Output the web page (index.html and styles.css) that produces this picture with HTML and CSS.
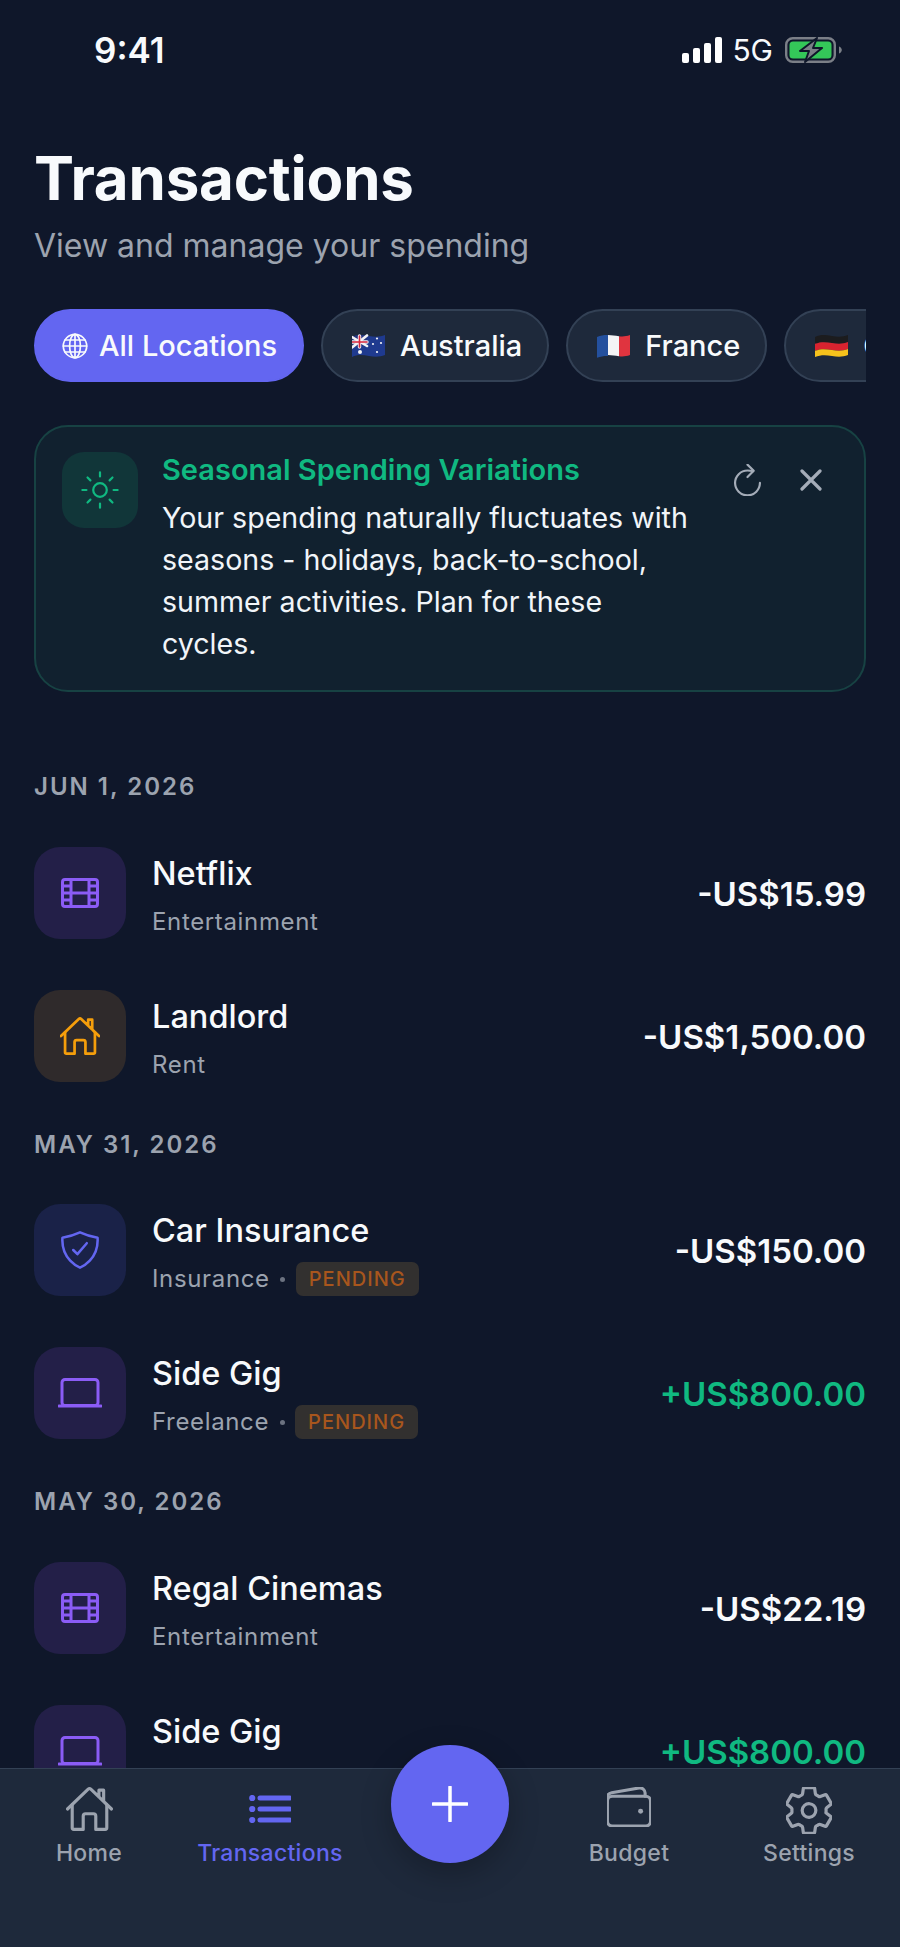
FILE: index.html

```html
<!DOCTYPE html>
<html lang="en">
<head>
  <meta charset="UTF-8">
  <meta name="viewport" content="width=device-width, initial-scale=1.0">
  <title>Transactions</title>
  <link rel="stylesheet" href="styles.css">
</head>
<body>
  <svg class="sprite" aria-hidden="true">
    <symbol id="i-film" viewBox="0 0 38 30">
      <rect x="1.5" y="1.5" width="35" height="27" rx="2.5"/>
      <path d="M10 1.5v27M28 1.5v27M10 15h18M1.5 8h8.5M1.5 15h8.5M1.5 22h8.5M28 8h8.5M28 15h8.5M28 22h8.5"/>
    </symbol>
    <symbol id="i-home" viewBox="32 32 448 448">
      <path d="M80 212v236a16 16 0 0016 16h96V328a24 24 0 0124-24h80a24 24 0 0124 24v136h96a16 16 0 0016-16V212"/>
      <path d="M480 256L266.89 52c-5-5.28-16.69-5.34-21.78 0L32 256M400 179V64h-48v69"/>
    </symbol>
    <symbol id="i-laptop" viewBox="0 0 44 30">
      <rect x="4" y="1.5" width="36" height="26" rx="3"/>
      <path d="M1 28h42"/>
    </symbol>
  </svg>

  <main class="content">
    <div class="status-bar">
      <span class="time">9:41</span>
      <div class="status-icons">
        <svg class="signal" viewBox="0 0 41 26">
          <rect x="0" y="16" width="7" height="10" rx="2"/>
          <rect x="11" y="11" width="7" height="15" rx="2"/>
          <rect x="22" y="6" width="7" height="20" rx="2"/>
          <rect x="33" y="0" width="7" height="26" rx="2"/>
        </svg>
        <span class="network">5G</span>
        <svg class="battery" viewBox="0 0 57 26">
          <rect x="1.2" y="1.2" width="48.6" height="23.6" rx="6.5" class="battery-case"/>
          <rect x="4.5" y="4.5" width="42" height="17" rx="3.5" class="battery-fill"/>
          <path d="M54 9.5c1.8.6 2.8 2 2.8 3.5s-1 2.9-2.8 3.5z" class="battery-cap"/>
          <path d="M32 1L15 14h9l-4 11 17-14h-9z" class="battery-bolt"/>
        </svg>
      </div>
    </div>

    <header class="page-head">
      <h1>Transactions</h1>
      <p>View and manage your spending</p>
    </header>

    <div class="chips">
      <div class="chip active">
        <svg class="globe" viewBox="0 0 26 26">
          <circle cx="13" cy="13" r="11.7"/>
          <ellipse cx="13" cy="13" rx="5.4" ry="11.7"/>
          <path d="M13 1.3v23.4M1.3 13h23.4M3 7h20M3 19h20"/>
        </svg>
        All Locations
      </div>
      <div class="chip">
        <svg class="flag" viewBox="0 0 33 24">
          <path d="M0 3c6-3 11-2 17-1s11 1 16-1v20c-5 2-10 2-16 1S6 20 0 23z" fill="#1f3a8f"/>
          <path d="M0 3c5-2.400 10-2.300 15-1.500V12c-5-.9-10-.8-15 1.500z" fill="#24347e"/>
          <path d="M0 3l15 9M15 1.500L0 13.500" stroke="#f3f3f5" stroke-width="2.600"/>
          <path d="M7.500 2v11M0 8h15" stroke="#f3f3f5" stroke-width="3.400"/>
          <path d="M7.500 2v11M0 8h15" stroke="#d7263d" stroke-width="1.600"/>
          <circle cx="8" cy="18" r="2" fill="#f3f3f5"/>
          <circle cx="25" cy="4.500" r="1.100" fill="#f3f3f5"/>
          <circle cx="21" cy="10" r="1.100" fill="#f3f3f5"/>
          <circle cx="29" cy="9" r="1.100" fill="#f3f3f5"/>
          <circle cx="25" cy="18" r="1.100" fill="#f3f3f5"/>
        </svg>
        Australia
      </div>
      <div class="chip">
        <svg class="flag" viewBox="0 0 33 24">
          <path d="M0 3c4-1.500 7-2 11-1.900V22c-4-.1-7 .3-11 1.800z" fill="#24509e"/>
          <path d="M11 1.100c4 .1 7 .7 11 1.100v20c-4-.4-7-1-11-1.200z" fill="#f4f4f6"/>
          <path d="M22 2.200c4 .4 7 .2 11-1.200v20c-4 1.400-7 1.600-11 1.200z" fill="#e0343f"/>
        </svg>
        France
      </div>
      <div class="chip">
        <svg class="flag" viewBox="0 0 33 24">
          <path d="M0 3c6-3 11-2 17-1s11 1 16-1v7c-5 2-10 2-16 1S6 7.500 0 9.800z" fill="#1c1c1e"/>
          <path d="M0 9.800c6-2.300 11-1.800 17-.8s11 1 16-1v7c-5 2-10 2-16 1S6 14.500 0 16.800z" fill="#d8232f"/>
          <path d="M0 16.800c6-2.300 11-1.800 17-.8s11 1 16-1v6c-5 2-10 2-16 1S6 20.600 0 23z" fill="#f6c21c"/>
        </svg>
        Germany
      </div>
    </div>

    <section class="insight">
      <div class="insight-icon">
        <svg viewBox="32 32 448 448">
          <path d="M256 48v48M256 416v48M403.080 108.920l-33.940 33.940M142.860 369.140l-33.940 33.940M464 256h-48M96 256H48M403.080 403.080l-33.940-33.940M142.860 142.860l-33.940-33.940"/>
          <circle cx="256" cy="256" r="80"/>
        </svg>
      </div>
      <div class="insight-text">
        <h2>Seasonal Spending Variations</h2>
        <p>Your spending naturally fluctuates with seasons - holidays, back-to-school, summer activities. Plan for these cycles.</p>
      </div>
      <div class="insight-actions">
        <svg class="refresh" viewBox="90 50 332 412">
          <path d="M320 146s24.360-12-64-12a160 160 0 10160 160"/>
          <path d="M256 58l80 80-80 80"/>
        </svg>
        <svg class="close" viewBox="0 0 22 22">
          <path d="M2 2l18 18M20 2L2 20"/>
        </svg>
      </div>
    </section>

    <h3 class="date first">JUN 1, 2026</h3>
    <div class="tx">
      <div class="tx-icon tile-violet"><svg class="film"><use href="#i-film"/></svg></div>
      <div class="tx-info">
        <div class="tx-name">Netflix</div>
        <div class="tx-sub">Entertainment</div>
      </div>
      <div class="tx-amount">-US$15.99</div>
    </div>
    <div class="tx">
      <div class="tx-icon tile-amber"><svg class="house"><use href="#i-home"/></svg></div>
      <div class="tx-info">
        <div class="tx-name">Landlord</div>
        <div class="tx-sub">Rent</div>
      </div>
      <div class="tx-amount">-US$1,500.00</div>
    </div>

    <h3 class="date">MAY 31, 2026</h3>
    <div class="tx">
      <div class="tx-icon tile-blue">
        <svg class="shield" viewBox="32 32 448 448">
          <path d="M336 176L225.200 304 176 255.800"/>
          <path d="M463.100 112.370C373.680 96.330 336.710 84.450 256 48c-80.710 36.450-117.680 48.330-207.100 64.370C32.700 369.130 240.580 457.790 256 464c15.420-6.210 223.300-94.870 207.100-351.630z"/>
        </svg>
      </div>
      <div class="tx-info">
        <div class="tx-name">Car Insurance</div>
        <div class="tx-sub">Insurance <span class="dot"></span> <span class="badge">PENDING</span></div>
      </div>
      <div class="tx-amount">-US$150.00</div>
    </div>
    <div class="tx">
      <div class="tx-icon tile-violet"><svg class="laptop"><use href="#i-laptop"/></svg></div>
      <div class="tx-info">
        <div class="tx-name">Side Gig</div>
        <div class="tx-sub">Freelance <span class="dot"></span> <span class="badge">PENDING</span></div>
      </div>
      <div class="tx-amount income">+US$800.00</div>
    </div>

    <h3 class="date">MAY 30, 2026</h3>
    <div class="tx">
      <div class="tx-icon tile-violet"><svg class="film"><use href="#i-film"/></svg></div>
      <div class="tx-info">
        <div class="tx-name">Regal Cinemas</div>
        <div class="tx-sub">Entertainment</div>
      </div>
      <div class="tx-amount">-US$22.19</div>
    </div>
    <div class="tx">
      <div class="tx-icon tile-violet"><svg class="laptop"><use href="#i-laptop"/></svg></div>
      <div class="tx-info">
        <div class="tx-name">Side Gig</div>
        <div class="tx-sub">Freelance</div>
      </div>
      <div class="tx-amount income">+US$800.00</div>
    </div>
  </main>

  <nav class="tabbar">
    <div class="tab">
      <svg class="tab-home"><use href="#i-home"/></svg>
      <span>Home</span>
    </div>
    <div class="tab current">
      <svg class="tab-list" viewBox="0 0 42 28">
        <circle cx="3.200" cy="3" r="3.100"/>
        <circle cx="3.200" cy="14" r="3.100"/>
        <circle cx="3.200" cy="25" r="3.100"/>
        <path d="M11 3h29.500M11 14h29.500M11 25h29.500"/>
      </svg>
      <span>Transactions</span>
    </div>
    <div class="tab-gap"></div>
    <div class="tab">
      <svg class="tab-wallet" viewBox="44 60 424 376">
        <rect x="48" y="144" width="416" height="288" rx="48" ry="48"/>
        <path d="M411.360 144v-30A50 50 0 00352 64.900L88.640 109.850A50 50 0 0048 159v49"/>
        <circle cx="368" cy="288" r="24" class="solid"/>
      </svg>
      <span>Budget</span>
    </div>
    <div class="tab">
      <svg class="tab-gear" viewBox="40 36 432 440">
        <path d="M262.290 192.310a64 64 0 1057.400 57.400 64.130 64.130 0 00-57.400-57.400zM416.390 256a154.340 154.340 0 01-1.530 20.790l45.210 35.460a10.810 10.810 0 012.450 13.750l-42.770 74a10.810 10.810 0 01-13.140 4.590l-44.900-18.080a16.110 16.110 0 00-15.170 1.750A164.480 164.480 0 01325 400.800a15.940 15.940 0 00-8.820 12.140l-6.730 47.890a11.080 11.080 0 01-10.680 9.170h-85.540a11.110 11.110 0 01-10.690-8.870l-6.720-47.820a16.070 16.070 0 00-9-12.220 155.300 155.300 0 01-21.460-12.570 16 16 0 00-15.110-1.710l-44.890 18.070a10.810 10.810 0 01-13.140-4.580l-42.770-74a10.800 10.800 0 012.450-13.750l38.210-30a16.050 16.050 0 006-14.080c-.36-4.170-.58-8.330-.58-12.500s.21-8.270.58-12.350a16 16 0 00-6.070-13.940l-38.190-30A10.810 10.810 0 0149.480 186l42.770-74a10.810 10.810 0 0113.140-4.590l44.900 18.080a16.110 16.110 0 0015.170-1.750A164.480 164.480 0 01187 111.200a15.940 15.940 0 008.820-12.140l6.730-47.890A11.080 11.080 0 01213.230 42h85.540a11.110 11.110 0 0110.690 8.870l6.720 47.820a16.070 16.070 0 009 12.220 155.300 155.300 0 0121.460 12.570 16 16 0 0015.110 1.710l44.890-18.070a10.810 10.810 0 0113.140 4.580l42.770 74a10.800 10.800 0 01-2.450 13.750l-38.210 30a16.050 16.050 0 00-6.050 14.080c.33 4.140.55 8.300.55 12.470z"/>
      </svg>
      <span>Settings</span>
    </div>
    <button class="fab" aria-label="Add transaction">
      <svg viewBox="0 0 36 36"><path d="M18 1v34M1 18h34"/></svg>
    </button>
  </nav>
</body>
</html>
```

FILE: styles.css

```css
* {
  box-sizing: border-box;
}
html, body {
  margin: 0;
  height: 1947px;
}
body {
  display: flex;
  flex-direction: column;
  overflow: hidden;
  background: #0f172a;
  color: #f8fafc;
  font-family: Inter, "Liberation Sans", sans-serif;
}
svg {
  fill: none;
  stroke: currentColor;
  stroke-linecap: round;
  stroke-linejoin: round;
}
.sprite {
  display: none;
}
.content {
  flex: 1;
  min-height: 0;
  overflow: hidden;
  padding: 0 34px;
}

/* status bar */
.status-bar {
  display: flex;
  justify-content: space-between;
  align-items: center;
  height: 100px;
  padding: 0 24px 0 60px;
}
.time {
  font-size: 35px;
  font-weight: 600;
}
.status-icons {
  display: flex;
  align-items: center;
  gap: 12px;
}
.signal {
  width: 41px;
  height: 26px;
  fill: #fff;
  stroke: none;
}
.network {
  margin-left: -3px;
  font-size: 30px;
  font-weight: 400;
}
.battery {
  width: 57px;
  height: 26px;
}
.battery-case {
  stroke: #7b7f87;
  stroke-width: 2.400;
}
.battery-fill {
  fill: #34c759;
  stroke: none;
}
.battery-cap {
  fill: #7b7f87;
  stroke: none;
}
.battery-bolt {
  fill: #7b7f87;
  stroke: #0f172a;
  stroke-width: 2;
}

/* heading */
.page-head {
  padding-top: 44px;
}
.page-head h1 {
  margin: 0;
  font-size: 60px;
  line-height: 68px;
  font-weight: 700;
  letter-spacing: -.2px;
}
.page-head p {
  margin: 12px 0 0;
  font-size: 32px;
  line-height: 44px;
  color: #9ca3af;
}

/* location chips */
.chips {
  display: flex;
  gap: 17px;
  margin-top: 41px;
  overflow: hidden;
}
.chip {
  flex: none;
  display: flex;
  align-items: center;
  gap: 15px;
  height: 73px;
  padding: 0 25px 0 29px;
  background: #1e293b;
  border: 2px solid #334155;
  border-radius: 37px;
  font-size: 29px;
  font-weight: 500;
}
.chip.active {
  gap: 11px;
  padding: 0 25px 0 26px;
  background: #6366f1;
  border-color: #6366f1;
}
.globe {
  width: 26px;
  height: 26px;
  stroke-width: 1.700;
}
.flag {
  width: 33px;
  height: 24px;
  stroke: none;
}

/* insight card */
.insight {
  display: flex;
  align-items: flex-start;
  height: 267px;
  margin-top: 43px;
  padding: 25px 26px;
  background: #11212f;
  border: 2px solid #174243;
  border-radius: 34px;
}
.insight-icon {
  flex: none;
  display: flex;
  align-items: center;
  justify-content: center;
  width: 76px;
  height: 76px;
  margin-right: 24px;
  background: #113639;
  border-radius: 22px;
  color: #10b981;
}
.insight-icon svg {
  width: 38px;
  height: 38px;
  stroke-width: 26;
}
.insight-text {
  flex: 1;
}
.insight-text h2 {
  margin: 0;
  font-size: 29px;
  line-height: 36px;
  font-weight: 600;
  color: #10b981;
}
.insight-text p {
  margin: 9px 0 0;
  max-width: 530px;
  font-size: 28.600px;
  line-height: 42px;
  color: #f1f5f9;
}
.insight-actions {
  flex: none;
  display: flex;
  align-items: center;
  gap: 39px;
  padding: 12px 16px 0 0;
  color: #a4acb8;
}
.refresh {
  width: 27px;
  height: 32px;
  stroke-width: 28;
}
.close {
  width: 22px;
  height: 22px;
  stroke-width: 3.200;
}

/* transactions */
.date {
  margin: 0;
  padding: 22.500px 0 19px;
  font-size: 24px;
  line-height: 30px;
  font-weight: 600;
  letter-spacing: 2px;
  color: #9ca3af;
}
.date.first {
  padding-top: 80px;
}
.tx {
  display: flex;
  align-items: center;
  height: 143px;
}
.tx-icon {
  flex: none;
  display: flex;
  align-items: center;
  justify-content: center;
  width: 92px;
  height: 92px;
  margin-right: 26px;
  border-radius: 26px;
}
.tile-violet {
  background: #231f48;
  color: #8b5cf6;
}
.tile-amber {
  background: #2f2a2b;
  color: #f59e0b;
}
.tile-blue {
  background: #1a2248;
  color: #6366f1;
}
.film {
  width: 38px;
  height: 30px;
  stroke-width: 3;
}
.house {
  width: 40px;
  height: 38px;
  stroke-width: 32;
}
.shield {
  width: 38px;
  height: 38px;
  stroke-width: 30;
}
.laptop {
  width: 44px;
  height: 30px;
  stroke-width: 3;
}
.tx-info {
  flex: 1;
  min-width: 0;
  padding-top: 7px;
}
.tx-name {
  font-size: 32.500px;
  line-height: 40px;
  font-weight: 500;
}
.tx-sub {
  display: flex;
  align-items: center;
  gap: 10.500px;
  margin-top: 11px;
  height: 34px;
  font-size: 24px;
  line-height: 34px;
  letter-spacing: .65px;
  color: #9ca3af;
}
.dot {
  width: 5px;
  height: 5px;
  border-radius: 50%;
  background: #6b7280;
}
.badge {
  height: 34px;
  padding: 0 13px;
  background: #32302f;
  border-radius: 7px;
  font-size: 20px;
  font-weight: 500;
  letter-spacing: 1px;
  color: #a8561d;
}
.tx-amount {
  padding-top: 2px;
  font-size: 33px;
  font-weight: 600;
}
.income {
  color: #10b981;
}

/* tab bar */
.tabbar {
  position: relative;
  flex: none;
  display: grid;
  grid-template-columns: repeat(5, 1fr);
  align-items: start;
  height: 179px;
  background: #1e293b;
  border-top: 1px solid #334155;
}
.tab {
  display: flex;
  flex-direction: column;
  align-items: center;
  height: 100px;
  padding: 18px 2px 0 0;
  color: #9ca3af;
}
.tab span {
  position: absolute;
  top: 70px;
  font-size: 23px;
  line-height: 28px;
  font-weight: 500;
  letter-spacing: .3px;
}
.tab.current {
  padding-right: 0;
  color: #6366f1;
}
.tab-home {
  width: 47px;
  height: 44px;
  stroke-width: 32;
}
.tab-list {
  width: 42px;
  height: 28px;
  margin-top: 8px;
  stroke-width: 5;
}
.tab-list circle {
  fill: currentColor;
  stroke: none;
}
.tab-wallet {
  width: 44px;
  height: 40px;
  stroke-width: 30;
}
.tab-wallet .solid {
  fill: currentColor;
  stroke: none;
}
.tab-gear {
  width: 46px;
  height: 47px;
  stroke-width: 30;
}
.fab {
  position: absolute;
  top: -24px;
  left: 391px;
  display: flex;
  align-items: center;
  justify-content: center;
  width: 118px;
  height: 118px;
  padding: 0;
  border: 0;
  border-radius: 50%;
  background: #6366f1;
  color: #fff;
  box-shadow: 0 10px 30px rgba(0, 0, 0, 0.25);
}
.fab svg {
  width: 36px;
  height: 36px;
  stroke-width: 3.500;
}
```
